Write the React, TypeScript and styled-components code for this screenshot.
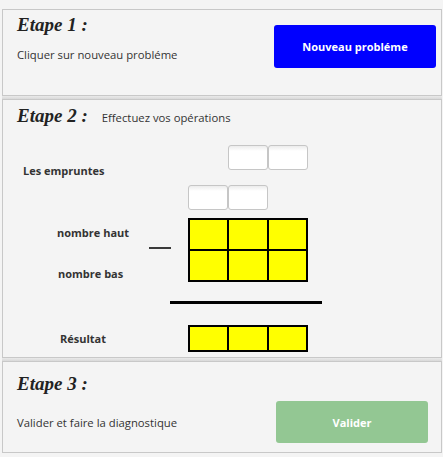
import styled, { createGlobalStyle } from "styled-components";

const GlobalStyle = createGlobalStyle`
  body {
    margin: 0;
    background: #f4f4f4;
    font-family: "Open Sans", "Noto Sans", sans-serif;
    color: #333;
  }
`;

const Page = styled.div`
  width: 440px;
  padding: 9px 0 0 2px;
`;

const Panel = styled.section<{ $height: number; $top: number }>`
  box-sizing: border-box;
  height: ${({ $height }) => $height}px;
  border: 1px solid #c8c8c8;
  background: #f4f4f4;
  padding: ${({ $top }) => $top}px 0 0 14px;
`;

const Divider = styled.div`
  height: 3px;
  background: linear-gradient(#e9e9e9, #d9d9d9);
`;

const Heading = styled.h2`
  margin: 0;
  font-family: "Liberation Serif", serif;
  font-style: italic;
  font-weight: 700;
  font-size: 19px;
  line-height: 22px;
  color: #222;
`;

const Text = styled.p`
  margin: 0;
  font-size: 11.3px;
  line-height: 15px;
`;

const StepOne = styled.div`
  display: grid;
  grid-template-columns: 1fr auto;
`;

const StepOneText = styled.div`
  display: flex;
  flex-direction: column;
  gap: 11px;
`;

const Button = styled.button<{ $bg: string; $w: number; $h: number }>`
  width: ${({ $w }) => $w}px;
  height: ${({ $h }) => $h}px;
  border: none;
  border-radius: 3px;
  background: ${({ $bg }) => $bg};
  color: #fff;
  font-family: "Open Sans", sans-serif;
  font-weight: 700;
  font-size: 11px;
  cursor: pointer;
`;

const NewButton = styled(Button)`
  margin: 11px 5px 0 0;
`;

const StepTwoHead = styled.div`
  display: flex;
  align-items: baseline;
  gap: 14px;
`;

const Ops = styled.div`
  display: grid;
  grid-template-columns: 132px 39px 120px;
  grid-template-rows: 25px 40px 40px 32px 43px 27px;
  margin-top: 18px;
`;

const BoxRow = styled.div<{ $row: number; $align: string }>`
  grid-column: 3;
  grid-row: ${({ $row }) => $row};
  justify-self: ${({ $align }) => $align};
  align-self: end;
  display: flex;
`;

const Box = styled.div`
  box-sizing: border-box;
  width: 40px;
  height: 25px;
  border: 1px solid #c6c6c6;
  border-radius: 3px;
  background: linear-gradient(#ececec, #fff 5px, #fff);
`;

const Label = styled.span<{ $row: string; $left: number; $shift: number }>`
  grid-column: 1;
  grid-row: ${({ $row }) => $row};
  align-self: center;
  padding-left: ${({ $left }) => $left}px;
  transform: translateY(${({ $shift }) => $shift}px);
  font-size: 11px;
  font-weight: 700;
  color: #333;
`;

const Minus = styled.div`
  grid-column: 2;
  grid-row: 3 / 5;
  align-self: center;
  width: 22px;
  height: 2px;
  margin-top: 4px;
  background: #3a3a3a;
`;

const Digits = styled.div<{ $row: string; $rows: number }>`
  grid-column: 3;
  grid-row: ${({ $row }) => $row};
  align-self: end;
  box-sizing: border-box;
  display: grid;
  grid-template-columns: repeat(3, 1fr);
  grid-template-rows: repeat(${({ $rows }) => $rows}, 1fr);
  gap: 2px;
  padding: 2px;
  background: #000;
  height: ${({ $rows }) => ($rows === 2 ? 64 : 27)}px;
`;

const Cell = styled.div`
  background: #ff0;
`;

const Rule = styled.div`
  grid-column: 2 / 4;
  grid-row: 5;
  margin: 19px -14px 0 21px;
  height: 3px;
  background: #000;
`;

const StepThreeRow = styled.div`
  display: flex;
  align-items: center;
  justify-content: space-between;
  padding-right: 13px;
  margin-top: 6px;
`;

const cells = (n: number) => Array.from({ length: n }, (_, i) => <Cell key={i} />);

export default function App() {
  return (
    <>
      <GlobalStyle />
      <Page>
        <Panel $height={87} $top={4}>
          <StepOne>
            <StepOneText>
              <Heading>Etape 1 :</Heading>
              <Text>Cliquer sur nouveau probléme</Text>
            </StepOneText>
            <NewButton $bg="#0000ff" $w={162} $h={43}>
              Nouveau probléme
            </NewButton>
          </StepOne>
        </Panel>
        <Divider />
        <Panel $height={259} $top={5}>
          <StepTwoHead>
            <Heading>Etape 2 :</Heading>
            <Text>Effectuez vos opérations</Text>
          </StepTwoHead>
          <Ops>
            <BoxRow $row={1} $align="end">
              <Box />
              <Box />
            </BoxRow>
            <Label $row="1 / 3" $left={6} $shift={-7}>
              Les empruntes
            </Label>
            <BoxRow $row={2} $align="start">
              <Box />
              <Box />
            </BoxRow>
            <Label $row="3" $left={40} $shift={2}>
              nombre haut
            </Label>
            <Label $row="4" $left={41} $shift={7}>
              nombre bas
            </Label>
            <Minus />
            <Digits $row="3 / 5" $rows={2}>
              {cells(6)}
            </Digits>
            <Rule />
            <Label $row="6" $left={43} $shift={0}>
              Résultat
            </Label>
            <Digits $row="6" $rows={1}>
              {cells(3)}
            </Digits>
          </Ops>
        </Panel>
        <Divider />
        <Panel $height={92} $top={11}>
          <Heading>Etape 3 :</Heading>
          <StepThreeRow>
            <Text>Valider et faire la diagnostique</Text>
            <Button $bg="#93c793" $w={152} $h={42}>
              Valider
            </Button>
          </StepThreeRow>
        </Panel>
      </Page>
    </>
  );
}
